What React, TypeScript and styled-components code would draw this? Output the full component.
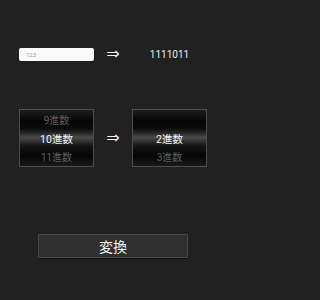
import React, { useState } from "react";
import styled, { createGlobalStyle } from "styled-components";

const GlobalStyle = createGlobalStyle`
  html, body {
    margin: 0;
    padding: 0;
    background: #212121;
  }
  body {
    font-family: Roboto, "Noto Sans CJK JP", sans-serif;
  }
`;

const Screen = styled.div`
  width: 226px;
  height: 300px;
  background: #212121;
  display: flex;
  flex-direction: column;
  align-items: center;
  padding-top: 46px;
  box-sizing: border-box;
`;

const Row = styled.div<{ $height: number }>`
  display: grid;
  grid-template-columns: 75px 38px 75px;
  align-items: center;
  height: ${(p) => p.$height}px;
`;

const NumberInput = styled.input`
  width: 75px;
  height: 13px;
  box-sizing: border-box;
  border: none;
  border-radius: 2px;
  background: #fafafa;
  padding: 0 0 0 7px;
  font-family: Roboto, sans-serif;
  font-size: 6px;
  color: #333;
  outline: none;

  &::placeholder {
    color: #9a9a9a;
  }
`;

const Arrow = styled.div`
  color: #f0f0f0;
  font-family: "DejaVu Sans", sans-serif;
  font-size: 16px;
  text-align: center;
  line-height: 1;
`;

const Result = styled.div`
  color: #eeeeee;
  font-size: 10px;
  text-align: center;
`;

const Picker = styled.div`
  width: 75px;
  height: 58px;
  box-sizing: border-box;
  border: 1px solid #4d4d4d;
  display: flex;
  flex-direction: column;
  justify-content: center;
  background: linear-gradient(
    to bottom,
    #1e1e1e 0%,
    #060606 20%,
    #0b0b0b 33%,
    #2a2a2a 42%,
    #4a4a4a 49%,
    #3c3c3c 53%,
    #141414 64%,
    #050505 82%,
    #1a1a1a 100%
  );
`;

const PickerItem = styled.div<{ $selected?: boolean }>`
  height: 18.6px;
  display: flex;
  align-items: center;
  justify-content: center;
  font-size: ${(p) => (p.$selected ? "10.5px" : "10px")};
  font-weight: 400;
  color: ${(p) => (p.$selected ? "#f4f4f4" : "#5e5e5e")};
`;

const Convert = styled.button`
  margin-top: 67px;
  width: 150px;
  height: 24px;
  box-sizing: border-box;
  border: 1px solid #4a4a4a;
  border-radius: 1px;
  background: #2f2f2f;
  box-shadow: 0 1px 1px #151515;
  color: #f2f2f2;
  font-family: "Noto Sans CJK JP", sans-serif;
  font-size: 14px;
  padding: 0;
  line-height: 1;
`;

const Spacer = styled.div`
  height: 50px;
`;

type WheelProps = { items: string[]; selected: number };

const Wheel: React.FC<WheelProps> = ({ items, selected }) => {
  const rows = [selected - 1, selected, selected + 1];
  return (
    <Picker>
      {rows.map((i) => (
        <PickerItem key={i} $selected={i === selected}>
          {items[i] ?? ""}
        </PickerItem>
      ))}
    </Picker>
  );
};

const bases = Array.from({ length: 35 }, (_, i) => `${i + 2}進数`);

const App: React.FC = () => {
  const [value, setValue] = useState("");

  return (
    <>
      <GlobalStyle />
      <Screen>
        <Row $height={13}>
          <NumberInput
            placeholder="123"
            value={value}
            onChange={(e) => setValue(e.target.value)}
          />
          <Arrow>⇒</Arrow>
          <Result>1111011</Result>
        </Row>

        <Spacer />

        <Row $height={58}>
          <Wheel items={bases} selected={8} />
          <Arrow>⇒</Arrow>
          <Wheel items={bases} selected={0} />
        </Row>

        <Convert>変換</Convert>
      </Screen>
    </>
  );
};

export default App;
